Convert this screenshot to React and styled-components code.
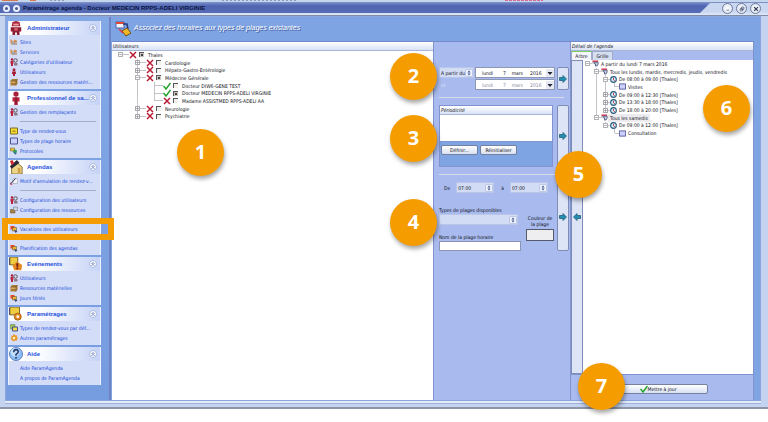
import styled, { createGlobalStyle } from "styled-components";

const GlobalStyle = createGlobalStyle`
  * {
    box-sizing: border-box;
  }

  body {
    margin: 0;
    background: white;
    color: #101018;
    font-family: "DejaVu Sans Condensed", "DejaVu Sans", sans-serif;
    font-size: 5px;
    line-height: 8px;
  }

  button, input, select {
    font: inherit;
    color: inherit;
    margin: 0;
    padding: 0;
    border-radius: 0;
    appearance: none;
  }

  ul {
    list-style: none;
    margin: 0;
    padding: 0;
  }

  svg {
    display: block;
    flex: none;
  }
`;

const Page = styled.div`
  min-height: 100vh;
  display: flex;
  flex-direction: column;
  padding-bottom: 14px;
`;

const Window = styled.div`
  flex: 1;
  display: flex;
  flex-direction: column;
  background: #c3d3f0;
  border-bottom: 2px solid #8e95a8;
`;

const TopStrip = styled.div`
  height: 3px;
  background: #c4d6ee;
  border-bottom: 1px solid #7d90c4;
  overflow: hidden;
`;

const TitleBar = styled.header`
  display: flex;
  height: 13px;
  border-bottom: 1px solid #7f8ca8;
  background: linear-gradient(#c9d6f0 70%, #dfe8f8);
`;

const TitleFill = styled.div`
  flex: 1;
  height: 10px;
  display: flex;
  align-items: center;
  gap: 3px;
  padding-left: 3px;
  background: linear-gradient(#7186c8, #5065b0 30%, #566cb4);
  clip-path: polygon(0 0, 100% 0, calc(100% - 10px) 100%, 0 100%);
`;

const Title = styled.h1`
  margin: 0;
  font-family: "Liberation Sans", sans-serif;
  font-size: 6px;
  line-height: 8px;
  color: #0a1440;
  white-space: nowrap;
`;

const TitleDot = styled.span`
  width: 7px;
  height: 7px;
  border-radius: 50%;
  border: 2px solid #e8eefc;
  background: #4a5a90;
`;

const WindowButtons = styled.div`
  display: flex;
  gap: 3px;
  padding: 0 7px 0 12px;
`;

const RoundButton = styled.button`
  width: 11px;
  height: 11px;
  display: grid;
  place-items: center;
  border: 1px solid #6e7a9c;
  border-radius: 50%;
  background: radial-gradient(white, #d5def0);
`;

const Body = styled.div`
  flex: 1;
  display: grid;
  grid-template-columns: 103px minmax(0, 1fr);
  margin: 0 7px 6px 5px;
  border: 1px solid #8da5dc;
  box-shadow: 0 2px 0 #e3ebfa, 0 3px 0 #9fb2da;
  background: #7ea4e4;
`;

const Sidebar = styled.nav`
  position: relative;
  z-index: 1;
  display: flex;
  flex-direction: column;
  gap: 2px;
  padding: 4px 8px 15px 2px;
  background: linear-gradient(#82a8e6, #769ce0);
`;

const Group = styled.section`
  padding-bottom: 2px;
  background: #d4ddf8;
  border: solid #eef2fd;
  border-width: 0 1px;
`;

const GroupHead = styled.div`
  display: flex;
  align-items: center;
  height: 14px;
  margin-bottom: 2px;
  padding-right: 3px;
  background: linear-gradient(90deg, white 30%, #c6d3f7);
`;

const GroupIcon = styled.span`
  width: 15px;
  margin-right: 3px;
`;

const GroupTitle = styled.h2`
  flex: 1;
  margin: 0;
  font-family: "Liberation Sans", sans-serif;
  font-size: 6px;
  line-height: 8px;
  color: #1d50dc;
  white-space: nowrap;
`;

const Collapse = styled.button`
  width: 8px;
  height: 8px;
  display: grid;
  place-items: center;
  border: 1px solid #a9b9e0;
  border-radius: 50%;
  background: white;
`;

const NavItem = styled.li`
  position: relative;
  height: 10px;
  display: flex;
  align-items: center;
  padding-left: 1px;
`;

const NavIcon = styled.span`
  flex: none;
  width: 10px;
`;

const NavLink = styled.a`
  color: #1448d8;
  text-decoration: none;
  white-space: nowrap;
`;

const NavRule = styled.li`
  height: 9px;
  display: flex;
  align-items: center;
  padding: 0 4px 0 11px;

  &::before {
    content: "";
    flex: 1;
    border-top: ${(p) => (p.$blank ? "0" : "1px solid #a3acc8")};
  }
`;

const Highlight = styled.span`
  position: absolute;
  inset: -6px -14px -6px -7px;
  border: 6px solid #f59c00;
  pointer-events: none;
`;

const Main = styled.main`
  display: flex;
  flex-direction: column;
  border-left: 2px solid #6f83c2;
  box-shadow: -1px 0 0 #d3d5e0;
  padding: 0 6px 0 1px;
`;

const Banner = styled.div`
  display: flex;
  align-items: center;
  gap: 3px;
  height: 24px;
  padding: 0 2px 0 3px;
`;

const BannerText = styled.p`
  margin: 0;
  padding-bottom: 3px;
  font-family: "Liberation Sans", sans-serif;
  font-style: italic;
  font-size: 7px;
  line-height: 8px;
  color: white;
  text-shadow: 1px 1px 0 #3f5a9c;
`;

const Columns = styled.div`
  flex: 1;
  display: grid;
  grid-template-columns: minmax(0, 1fr) 137px 183px;
  border-top: 1px solid #7389cc;
`;

const Panel = styled.section`
  position: relative;
  display: flex;
  flex-direction: column;
  border-right: 1px solid #8093cf;
  background: ${(p) => (p.$tinted ? "#a9bbee" : "white")};
`;

const PanelHead = styled.h3`
  margin: 0;
  height: 9px;
  padding-left: 1px;
  font-weight: normal;
  font-size: 5px;
  line-height: 8px;
  font-style: ${(p) => (p.$italic ? "italic" : "normal")};
  background: linear-gradient(white, #d9e2f6);
  border-bottom: 1px solid #a9b6d8;
`;

const Tree = styled.ul`
  display: grid;
  grid-auto-rows: 1fr;
  height: ${(p) => p.$height}px;
`;

const TreeRow = styled.li`
  display: flex;
  align-items: center;
  min-height: 0;
  white-space: nowrap;
`;

const Guide = styled.span`
  align-self: stretch;
  width: ${(p) => p.$step}px;
  background: ${(p) =>
    p.$line
      ? "linear-gradient(#c4c4c8, #c4c4c8) center / 1px 100% no-repeat"
      : "none"};
`;

const Branch = styled.span`
  align-self: stretch;
  width: ${(p) => p.$step}px;
  display: grid;
  place-items: center;
  background:
    linear-gradient(#c4c4c8, #c4c4c8) right center / 50% 1px no-repeat,
    linear-gradient(#c4c4c8, #c4c4c8) center top / 1px ${(p) => p.$drop} no-repeat;
`;

const Expander = styled.button`
  display: block;
  width: 5px;
  height: 5px;
  border: 0;
`;

const RowLabel = styled.label`
  display: flex;
  align-items: center;
  gap: 4px;
  padding-left: 2px;
`;

const RowText = styled.span`
  padding: 0 2px;
  background: ${(p) => (p.$selected ? "#ececf0" : "none")};
`;

const Check = styled.input`
  width: 5px;
  height: 5px;
  border: solid #55555e;
  border-width: 1px 0 0 1px;
  background: #f2f0ea;

  &:checked {
    background: linear-gradient(#444, #444) center / 2px 2px no-repeat #c9c7c0;
  }
`;

const Planner = styled.section`
  display: flex;
  flex-direction: column;
  gap: 7px;
  padding: 25px 1px 0 5px;
  background: #a9bbee;
  border-right: 1px solid #8093cf;
`;

const Step = styled.div`
  position: relative;
  display: grid;
  grid-template-columns: minmax(0, 1fr) 12px;
  gap: 4px;
  height: ${(p) => p.$height}px;
`;

const Rule = styled.hr`
  width: 125px;
  height: 1px;
  margin: 0;
  border: 0;
  background: #d9dde8;
`;

const ArrowButton = styled.button`
  display: grid;
  place-items: center;
  border: 1px solid #7e8cb8;
  border-radius: 2px;
  background: #dde4f6;
`;

const DateGrid = styled.div`
  display: grid;
  grid-template-columns: 35px 80px;
  grid-auto-rows: 11px;
  row-gap: 1px;
  column-gap: 1px;
  align-items: center;
`;

const SelectBox = styled.span`
  display: grid;
  width: ${(p) => p.$width || 35}px;
  height: 11px;
  align-items: center;

  > * {
    grid-area: 1 / 1;
  }

  > svg {
    justify-self: end;
    margin-right: 1px;
    pointer-events: none;
  }
`;

const Select = styled.select`
  width: 100%;
  height: 11px;
  padding: 0 ${(p) => (p.$white ? 0 : 7)}px 0 ${(p) => p.$inset || 1}px;
  border: 1px solid ${(p) => (p.$white ? "#8e97b4" : "#b9c6ea")};
  background: ${(p) => (p.$white ? "white" : "#d2dcf5")};
  opacity: 1;
  color: ${(p) => (p.disabled ? "#858ba0" : "#101018")};
`;

const FaintLabel = styled.span`
  padding-left: 2px;
  color: #d7e0fa;
`;

const PeriodBox = styled.div`
  display: flex;
  flex-direction: column;
  border: 1px solid #8093cf;
  background: #7ea4e4;
`;

const PeriodList = styled.div`
  height: 27px;
  border-bottom: 1px solid #8093cf;
  background: white;
`;

const ButtonRow = styled.div`
  display: flex;
  gap: 2px;
  padding: 3px 1px;
`;

const PushButton = styled.button`
  width: ${(p) => p.$width}px;
  height: 10px;
  display: flex;
  align-items: center;
  justify-content: center;
  border: 1px solid #75819f;
  border-radius: 2px;
  background: linear-gradient(white, #d8e0f2);
  line-height: 8px;
`;

const SlotForm = styled.div`
  display: flex;
  flex-direction: column;
  justify-content: space-between;
`;

const TimeRow = styled.div`
  display: flex;
  align-items: center;
  gap: 7px;
  padding-left: 5px;
`;

const FieldLabel = styled.label`
  display: flex;
  align-items: center;
  gap: 6px;
`;

const SlotFields = styled.div`
  display: grid;
  grid-template-columns: 82px 32px;
  align-items: end;
  height: 46px;
`;

const Stack = styled.div`
  display: flex;
  flex-direction: column;
  gap: ${(p) => p.$gap || 0}px;
`;

const ColourField = styled.label`
  align-self: center;
  display: flex;
  flex-direction: column;
  align-items: center;
  text-align: center;
  gap: 2px;
  margin-left: 6px;
  line-height: 6px;
  white-space: nowrap;
`;

const Swatch = styled.input`
  width: 28px;
  height: 12px;
  border: 1px solid #555b6c;
  background: #eeeef0;
`;

const TextInput = styled.input`
  width: 82px;
  height: 10px;
  border: 1px solid #8a94b4;
  background: white;
`;

const Tabs = styled.div`
  display: flex;
  height: 9px;
`;

const Tab = styled.button`
  width: ${(p) => p.$width}px;
  border: 1px solid #a0abc8;
  border-top: 1px solid ${(p) => (p.$active ? "#7ccf5c" : "#a0abc8")};
  border-bottom: 0;
  background: ${(p) => (p.$active ? "#f4f6fc" : "#d5ddf0")};
  line-height: 7px;
`;

const Detail = styled.div`
  flex: 1;
  display: grid;
  grid-template-columns: 12px minmax(0, 1fr);
  background: white;
`;

const BackButton = styled(ArrowButton)`
  border-radius: 0;
`;

const DetailFooter = styled.div`
  position: relative;
  height: 26px;
  display: flex;
  align-items: center;
  padding: 3px 0 0 37px;
  border-top: 1px solid #8093cf;
`;

const Badge = styled.span`
  position: absolute;
  z-index: 2;
  left: ${(p) => p.$left}px;
  top: ${(p) => p.$top}px;
  width: 47px;
  height: 47px;
  border-radius: 50%;
  background: #f59c00;
  box-shadow: 1px 3px 4px rgba(0, 0, 0, 0.35);
  color: white;
  font-family: "Open Sans", sans-serif;
  font-weight: 700;
  font-size: 20px;
  line-height: 46px;
  text-align: center;
`;

// small pictures, all on a 16 x 16 grid
const drawings = {
  person: (
    <>
      <circle cx="8" cy="3.5" r="3" fill="#a8203c" />
      <path d="M4 7h8v5h-2v4H6v-4H4z" fill="#b82440" />
      <path d="M8 7v8" stroke="#5c1020" />
    </>
  ),
  robot: (
    <>
      <path d="M4 1l4-1 4 1 1 5H3z" fill="#a8243c" />
      <path d="M2 7h12v5h-2v4H9v-3H7v3H4v-4H2z" fill="#8c1c34" />
      <path d="M5 3h6v2H5z" fill="#e8a8a0" />
      <path d="M6 8h4v3H6z" fill="#d85860" />
    </>
  ),
  sites: (
    <>
      <path d="M1 2l4 3v8l-4-2zM9 3l5 2v8H7V7z" fill="#d88c48" />
      <path d="M3 6l5 3 6-3v8H3z" fill="#b8a89c" />
      <path d="M5 8h3v5" stroke="#7890c8" fill="none" />
    </>
  ),
  people: (
    <>
      <circle cx="4" cy="3" r="2.5" fill="#b01c38" />
      <path d="M1 6h6v5H6v5H2v-5H1z" fill="#b82440" />
      <circle cx="11" cy="5" r="3.5" fill="none" stroke="#58505c" strokeWidth="2" />
      <path d="M8 10h7v5H8z" fill="#8c7888" />
    </>
  ),
  box: (
    <>
      <path d="M1 6l3-4h11v9l-3 4H1z" fill="#a87c38" />
      <path d="M1 6h11v9M12 6l3-4" stroke="#64481c" fill="none" />
      <path d="M2 7h9v3H2z" fill="#d0a860" />
    </>
  ),
  note: (
    <>
      <path d="M1 2h14v12H1z" fill="#f4dc30" stroke="#806c20" strokeWidth="2" />
      <path d="M5 7h6v3H5z" fill="#a88c20" />
    </>
  ),
  slot: <path d="M1 2h14v12H1z" fill="#ccd0fc" stroke="#4c5498" strokeWidth="2" />,
  links: (
    <>
      <path d="M1 2h8v6H1z" fill="#e8c040" stroke="#705820" />
      <circle cx="10" cy="9" r="4" fill="#38a058" />
      <path d="M7 9l7 5-4 1z" fill="#3058a0" />
    </>
  ),
  house: (
    <>
      <path d="M3 8l6-5 6 5v8H3z" fill="#ecd488" stroke="#806830" />
      <path d="M1 7l8-7 3 3-9 7z" fill="#282838" />
      <path d="M1 1l3-1 2 4-3 2z" fill="#c82c30" />
      <path d="M10 9h3v6h-3z" fill="#d0a048" />
    </>
  ),
  cancel: (
    <>
      <path d="M6 3h9v10H6z" fill="#f4f4f8" stroke="#8890a8" />
      <path d="M1 14L11 3" stroke="#303848" strokeWidth="2" />
      <path d="M1 11l4 4-4 1z" fill="#c82838" />
    </>
  ),
  tools: (
    <>
      <path d="M1 7h9v7H1z" fill="#a8803c" stroke="#604820" />
      <path d="M7 2h8v7H7z" fill="#d0d4e0" stroke="#606880" />
    </>
  ),
  vacation: (
    <>
      <path d="M1 2h8v7H1z" fill="#e84828" />
      <path d="M5 5h8v7H5z" fill="#f0b830" stroke="#504038" />
      <path d="M8 9l7 4-4 3z" fill="#384878" />
    </>
  ),
  event: (
    <>
      <path d="M1 0h9v9H1z" fill="#f0cc40" stroke="#685828" />
      <path d="M0 1v8" stroke="#404868" strokeWidth="2" />
      <path d="M9 5l6 4-1 6H6L4 10z" fill="#e88820" />
      <path d="M9.500 7v4M9.500 12v2" stroke="#681818" strokeWidth="2" />
    </>
  ),
  gear: (
    <>
      <path d="M6 1h4v2l3-1 1 4 2 2-2 3-1 3-4-1-3 2-2-3-3-2 2-3-1-4 4 1z" fill="#e89828" />
      <circle cx="8" cy="8" r="2.500" fill="#fff0c0" />
    </>
  ),
  params: (
    <>
      <path d="M1 0h11v9H1z" fill="#f0cc40" stroke="#685828" />
      <path d="M0 1v8" stroke="#404868" strokeWidth="2" />
      <circle cx="10" cy="11" r="4" fill="#e88820" stroke="#a05c10" />
      <circle cx="10" cy="11" r="1.500" fill="white" />
    </>
  ),
  copy: (
    <>
      <path d="M1 1h9v9H1z" fill="#9cc058" stroke="#607840" />
      <path d="M5 6h10v8H5z" fill="#f0dc48" stroke="#405090" strokeWidth="2" />
    </>
  ),
  banner: (
    <>
      <path d="M1 1h8v6H1z" fill="#f4f4fc" stroke="#4860a8" />
      <path d="M1 1h8v2H1z" fill="#e04838" />
      <path d="M8 3h4l1 5" fill="none" stroke="#283878" strokeWidth="1.500" />
      <path d="M7 10l5-3 4 5-5 3z" fill="#f0b828" stroke="#705018" />
      <path d="M4 8l4 4" stroke="#d83838" strokeWidth="1.500" />
    </>
  ),
  help: (
    <>
      <circle cx="8" cy="8" r="7.500" fill="#8cbcf4" stroke="#5c7cb8" />
      <circle cx="7" cy="6" r="5" fill="#c4e0fc" />
      <path d="M5.500 6q0-3 2.500-3t2.500 2.500Q10.500 7 8 8.500v1.500M8 11.500v2" fill="none" stroke="#24386c" strokeWidth="1.800" />
    </>
  ),
  cross: (
    <>
      <path d="M2 2l12 12M14 2L2 14" stroke="#b81c34" strokeWidth="3" />
      <path d="M2 4l3 3" stroke="#e0889c" strokeWidth="2" />
    </>
  ),
  tick: <path d="M1 8l5 6L15 2" fill="none" stroke="#24a42c" strokeWidth="3" />,
  calendar: (
    <>
      <path d="M1 1h13v4H1z" fill="#d84058" />
      <path d="M1 5h4v3H1z" fill="#8c94a8" />
      <path d="M6 5h8v4q0 5-6 5V9H6z" fill="#c8d0e4" stroke="#505c80" strokeWidth="2" />
    </>
  ),
  clock: (
    <>
      <circle cx="8" cy="8" r="6.500" fill="#d8f0f8" stroke="#285c80" strokeWidth="2.500" />
      <path d="M8 4v5l3 2" fill="none" stroke="#b82c3c" strokeWidth="2" />
    </>
  ),
  right: <path d="M1 5h7V1l7 7-7 7v-4H1z" fill="#2490b0" stroke="#1c5878" strokeWidth="1.500" />,
  left: <path d="M15 5H8V1L1 8l7 7v-4h7z" fill="#2490b0" stroke="#1c5878" strokeWidth="1.500" />,
  up: <path d="M4 8l4-4 4 4M4 13l4-4 4 4" fill="none" stroke="#2c4ca8" strokeWidth="2" />,
  spin: (
    <>
      <rect x="1" y="1" width="14" height="14" rx="2" fill="#eef2fc" stroke="#98a8d0" />
      <path d="M5 7l3-4 3 4zM5 9l3 4 3-4z" fill="#3c5088" />
    </>
  ),
  drop: (
    <>
      <path d="M0 0h16v16H0z" fill="#e4e8f2" />
      <path d="M3 6h10l-5 6z" fill="#202430" />
    </>
  ),
  plus: <path d="M1.500 1.500h13v13h-13zM4 8h8M8 4v8" fill="white" stroke="#70707c" strokeWidth="2" />,
  minus: <path d="M1.500 1.500h13v13h-13zM4 8h8" fill="white" stroke="#80808c" strokeWidth="2" />,
  min: <path d="M4 11h7" stroke="#4c5878" strokeWidth="2" />,
  restore: <path d="M6 3h7v6H6zM3 7h7v6H3z" fill="#e8eefa" stroke="#4c5878" strokeWidth="2" />,
  close: <path d="M3 3l10 10M13 3L3 13" stroke="#28304c" strokeWidth="3" />,
};

const Icon = ({ name, size = 8 }) => (
  <svg width={size} height={size} viewBox="0 0 16 16" aria-hidden="true">
    {drawings[name]}
  </svg>
);

const groups = [
  {
    title: "Administrateur",
    icon: "robot",
    items: [
      ["sites", "Sites"],
      ["sites", "Services"],
      ["people", "Catégories d'utilisateur"],
      ["person", "Utilisateurs"],
      ["box", "Gestion des ressources matéri..."],
    ],
  },
  {
    title: "Professionnel de sa...",
    icon: "person",
    items: [
      ["people", "Gestion des remplaçants"],
      "rule",
      ["note", "Type de rendez-vous"],
      ["slot", "Types de plage horaire"],
      ["links", "Protocoles"],
    ],
  },
  {
    title: "Agendas",
    icon: "house",
    items: [
      ["cancel", "Motif d'annulation de rendez-v..."],
      "rule",
      ["people", "Configuration des utilisateurs"],
      ["tools", "Configuration des ressources"],
      "blank",
      ["vacation", "Vacations des utilisateurs", true],
      "blank",
      ["vacation", "Planification des agendas"],
    ],
  },
  {
    title: "Evénements",
    icon: "event",
    items: [
      ["people", "Utilisateurs"],
      ["box", "Ressources matérielles"],
      ["vacation", "Jours fériés"],
    ],
  },
  {
    title: "Paramétrages",
    icon: "params",
    items: [
      ["copy", "Types de rendez-vous par déf..."],
      ["gear", "Autres paramétrages"],
    ],
  },
  {
    title: "Aide",
    icon: "help",
    items: [
      [null, "Aide ParamAgenda"],
      [null, "A propos de ParamAgenda"],
    ],
  },
];

// guides: one entry for each parent level, true where its line goes on
const users = [
  { guides: [], open: true, icon: "cross", checked: true, text: "Thales" },
  { guides: [0], open: false, icon: "cross", text: "Cardiologie" },
  { guides: [0], open: false, icon: "cross", text: "Hépato-Gastro-Entérologie" },
  { guides: [0], open: true, icon: "cross", checked: true, text: "Médecine Générale" },
  { guides: [0, 1], icon: "tick", text: "Docteur DIW6-GENE TEST" },
  { guides: [0, 1], icon: "tick", checked: true, text: "Docteur MEDECIN RPPS-ADELI VIRGINIE" },
  { guides: [0, 1], icon: "cross", last: true, text: "Madame ASSISTMED RPPS-ADELI AA" },
  { guides: [0], open: false, icon: "cross", text: "Neurologie" },
  { guides: [0], open: false, icon: "cross", last: true, text: "Psychiatrie" },
];

const slots = [
  { guides: [], open: true, icon: "calendar", text: "A partir du lundi 7 mars 2016" },
  { guides: [0], open: true, icon: "calendar", text: "Tous les  lundis, mardis, mercredis, jeudis, vendredis" },
  { guides: [0, 1], open: true, icon: "clock", text: "De 08:00 à 09:00 [Thales]" },
  { guides: [0, 1, 1], icon: "slot", last: true, text: "Visites" },
  { guides: [0, 1], open: false, icon: "clock", text: "De 09:00 à 12:30 [Thales]" },
  { guides: [0, 1], open: false, icon: "clock", text: "De 13:30 à 18:00 [Thales]" },
  { guides: [0, 1], open: false, icon: "clock", last: true, text: "De 18:00 à 20:00 [Thales]" },
  { guides: [0], open: true, icon: "calendar", selected: true, last: true, text: "Tous les  samedis" },
  { guides: [0, 0], open: true, icon: "clock", last: true, text: "De 09:00 à 12:00 [Thales]" },
  { guides: [0, 0, 0], icon: "slot", last: true, text: "Consultation" },
];

const dropOf = (row) => {
  if (!row.guides.length) return "0";
  return row.last ? "50%" : "100%";
};

const TreeView = ({ rows, step, height, checkable }) => (
  <Tree $height={height}>
    {rows.map((row) => (
      <TreeRow key={row.text}>
        {row.guides.map((line, i) => (
          <Guide key={i} $step={step} $line={line} />
        ))}
        <Branch $step={step} $drop={dropOf(row)}>
          {row.open !== undefined && (
            <Expander aria-label={`Déplier ${row.text}`}>
              <Icon name={row.open ? "minus" : "plus"} size={5} />
            </Expander>
          )}
        </Branch>
        <Icon name={row.icon} size={checkable ? 8 : 7} />
        {checkable ? (
          <RowLabel>
            <Check type="checkbox" defaultChecked={row.checked} />
            {row.text}
          </RowLabel>
        ) : (
          <RowText $selected={row.selected}>{row.text}</RowText>
        )}
      </TreeRow>
    ))}
  </Tree>
);

const SideGroup = ({ title, icon, items }) => (
  <Group>
    <GroupHead>
      <GroupIcon>
        <Icon name={icon} size={14} />
      </GroupIcon>
      <GroupTitle>{title}</GroupTitle>
      <Collapse aria-label={`Replier ${title}`}>
        <Icon name="up" size={6} />
      </Collapse>
    </GroupHead>
    <ul>
      {items.map((item, i) =>
        typeof item === "string" ? (
          <NavRule key={i} $blank={item === "blank"} />
        ) : (
          <NavItem key={i}>
            <NavIcon>{item[0] && <Icon name={item[0]} />}</NavIcon>
            <NavLink href="#">{item[1]}</NavLink>
            {item[2] && <Highlight />}
          </NavItem>
        )
      )}
    </ul>
  </Group>
);

const Dropdown = ({ value, label, icon = "spin", width, ...rest }) => (
  <SelectBox $width={width}>
    <Select aria-label={label} {...rest}>
      <option>{value}</option>
    </Select>
    <Icon name={icon} />
  </SelectBox>
);

const day = "lundi\u00a0\u00a0\u00a0\u00a0\u00a0\u00a0\u00a07\u00a0\u00a0\u00a0\u00a0mars\u00a0\u00a0\u00a0\u00a0\u00a02016";

export default function App() {
  return (
    <Page>
      <GlobalStyle />
      <Window>
        <TopStrip>
          <svg width="560" height="2" aria-hidden="true">
            <path d="M2 0h16M30 0h6" stroke="#d87850" strokeWidth="2" />
            <path d="M50 0h16M222 0h76" stroke="#54648c" strokeDasharray="2 2" />
            <path d="M505 0h38" stroke="#d86c90" strokeWidth="2" strokeDasharray="3 1" />
          </svg>
        </TopStrip>
        <TitleBar>
          <TitleFill>
            <TitleDot />
            <TitleDot />
            <Title>Paramétrage agenda - Docteur MEDECIN RPPS-ADELI VIRGINIE</Title>
          </TitleFill>
          <WindowButtons>
            <RoundButton aria-label="Réduire">
              <Icon name="min" size={6} />
            </RoundButton>
            <RoundButton aria-label="Restaurer">
              <Icon name="restore" size={6} />
            </RoundButton>
            <RoundButton aria-label="Fermer">
              <Icon name="close" size={6} />
            </RoundButton>
          </WindowButtons>
        </TitleBar>

        <Body>
          <Sidebar>
            {groups.map((group) => (
              <SideGroup key={group.title} {...group} />
            ))}
          </Sidebar>

          <Main>
            <Banner>
              <Icon name="banner" size={16} />
              <BannerText>Associez des horaires aux types de plages existantes</BannerText>
            </Banner>

            <Columns>
              <Panel>
                <PanelHead>Utilisateurs</PanelHead>
                <TreeView rows={users} step={17} height={69} checkable />
                <Badge $left={65} $top={87}>1</Badge>
              </Panel>

              <Planner>
                <Step $height={23}>
                  <DateGrid>
                    <Dropdown label="Début" value="A partir du" />
                    <Dropdown label="Date de début" value={day} icon="drop" width={80} $white $inset={6} />
                    <FaintLabel>et</FaintLabel>
                    <Dropdown label="Date de fin" value={day} icon="drop" width={80} $white $inset={6} disabled />
                  </DateGrid>
                  <ArrowButton aria-label="Appliquer les dates">
                    <Icon name="right" />
                  </ArrowButton>
                  <Badge $left={-49} $top={-14}>2</Badge>
                </Step>
                <Rule />
                <Step $height={62}>
                  <PeriodBox>
                    <PanelHead $italic>Périodicité</PanelHead>
                    <PeriodList />
                    <ButtonRow>
                      <PushButton $width={37}>Définir...</PushButton>
                      <PushButton $width={37}>Réinitialiser</PushButton>
                    </ButtonRow>
                  </PeriodBox>
                  <ArrowButton aria-label="Appliquer la périodicité">
                    <Icon name="right" />
                  </ArrowButton>
                  <Badge $left={-49} $top={10}>3</Badge>
                  <Badge $left={116} $top={46}>5</Badge>
                </Step>
                <Rule />
                <Step $height={69}>
                  <SlotForm>
                    <TimeRow>
                      <FieldLabel>
                        De
                        <Dropdown label="De" value="07:00" width={38} />
                      </FieldLabel>
                      <FieldLabel>
                        à
                        <Dropdown label="à" value="07:00" width={38} />
                      </FieldLabel>
                    </TimeRow>
                    <SlotFields>
                      <Stack $gap={8}>
                        <Stack>
                          <span>Types de plages disponibles</span>
                          <Dropdown label="Types de plages disponibles" value="" width={79} />
                        </Stack>
                        <Stack as="label">
                          Nom de la plage horaire
                          <TextInput />
                        </Stack>
                      </Stack>
                      <ColourField>
                        <span>
                          Couleur de
                          <br />
                          la plage
                        </span>
                        <Swatch readOnly />
                      </ColourField>
                    </SlotFields>
                  </SlotForm>
                  <ArrowButton aria-label="Appliquer la plage">
                    <Icon name="right" />
                  </ArrowButton>
                  <Badge $left={-49} $top={17}>4</Badge>
                </Step>
              </Planner>

              <Panel $tinted>
                <PanelHead $italic>Détail de l'agenda</PanelHead>
                <Tabs>
                  <Tab $active $width={21}>Arbre</Tab>
                  <Tab $width={21}>Grille</Tab>
                </Tabs>
                <Detail>
                  <BackButton aria-label="Retirer">
                    <Icon name="left" />
                  </BackButton>
                  <TreeView rows={slots} step={9} height={77} />
                </Detail>
                <DetailFooter>
                  <PushButton $width={100}>
                    <Icon name="tick" />
                    Mettre à jour
                  </PushButton>
                  <Badge $left={7} $top={-12}>7</Badge>
                </DetailFooter>
                <Badge $left={132} $top={43}>6</Badge>
              </Panel>
            </Columns>
          </Main>
        </Body>
      </Window>
    </Page>
  );
}
